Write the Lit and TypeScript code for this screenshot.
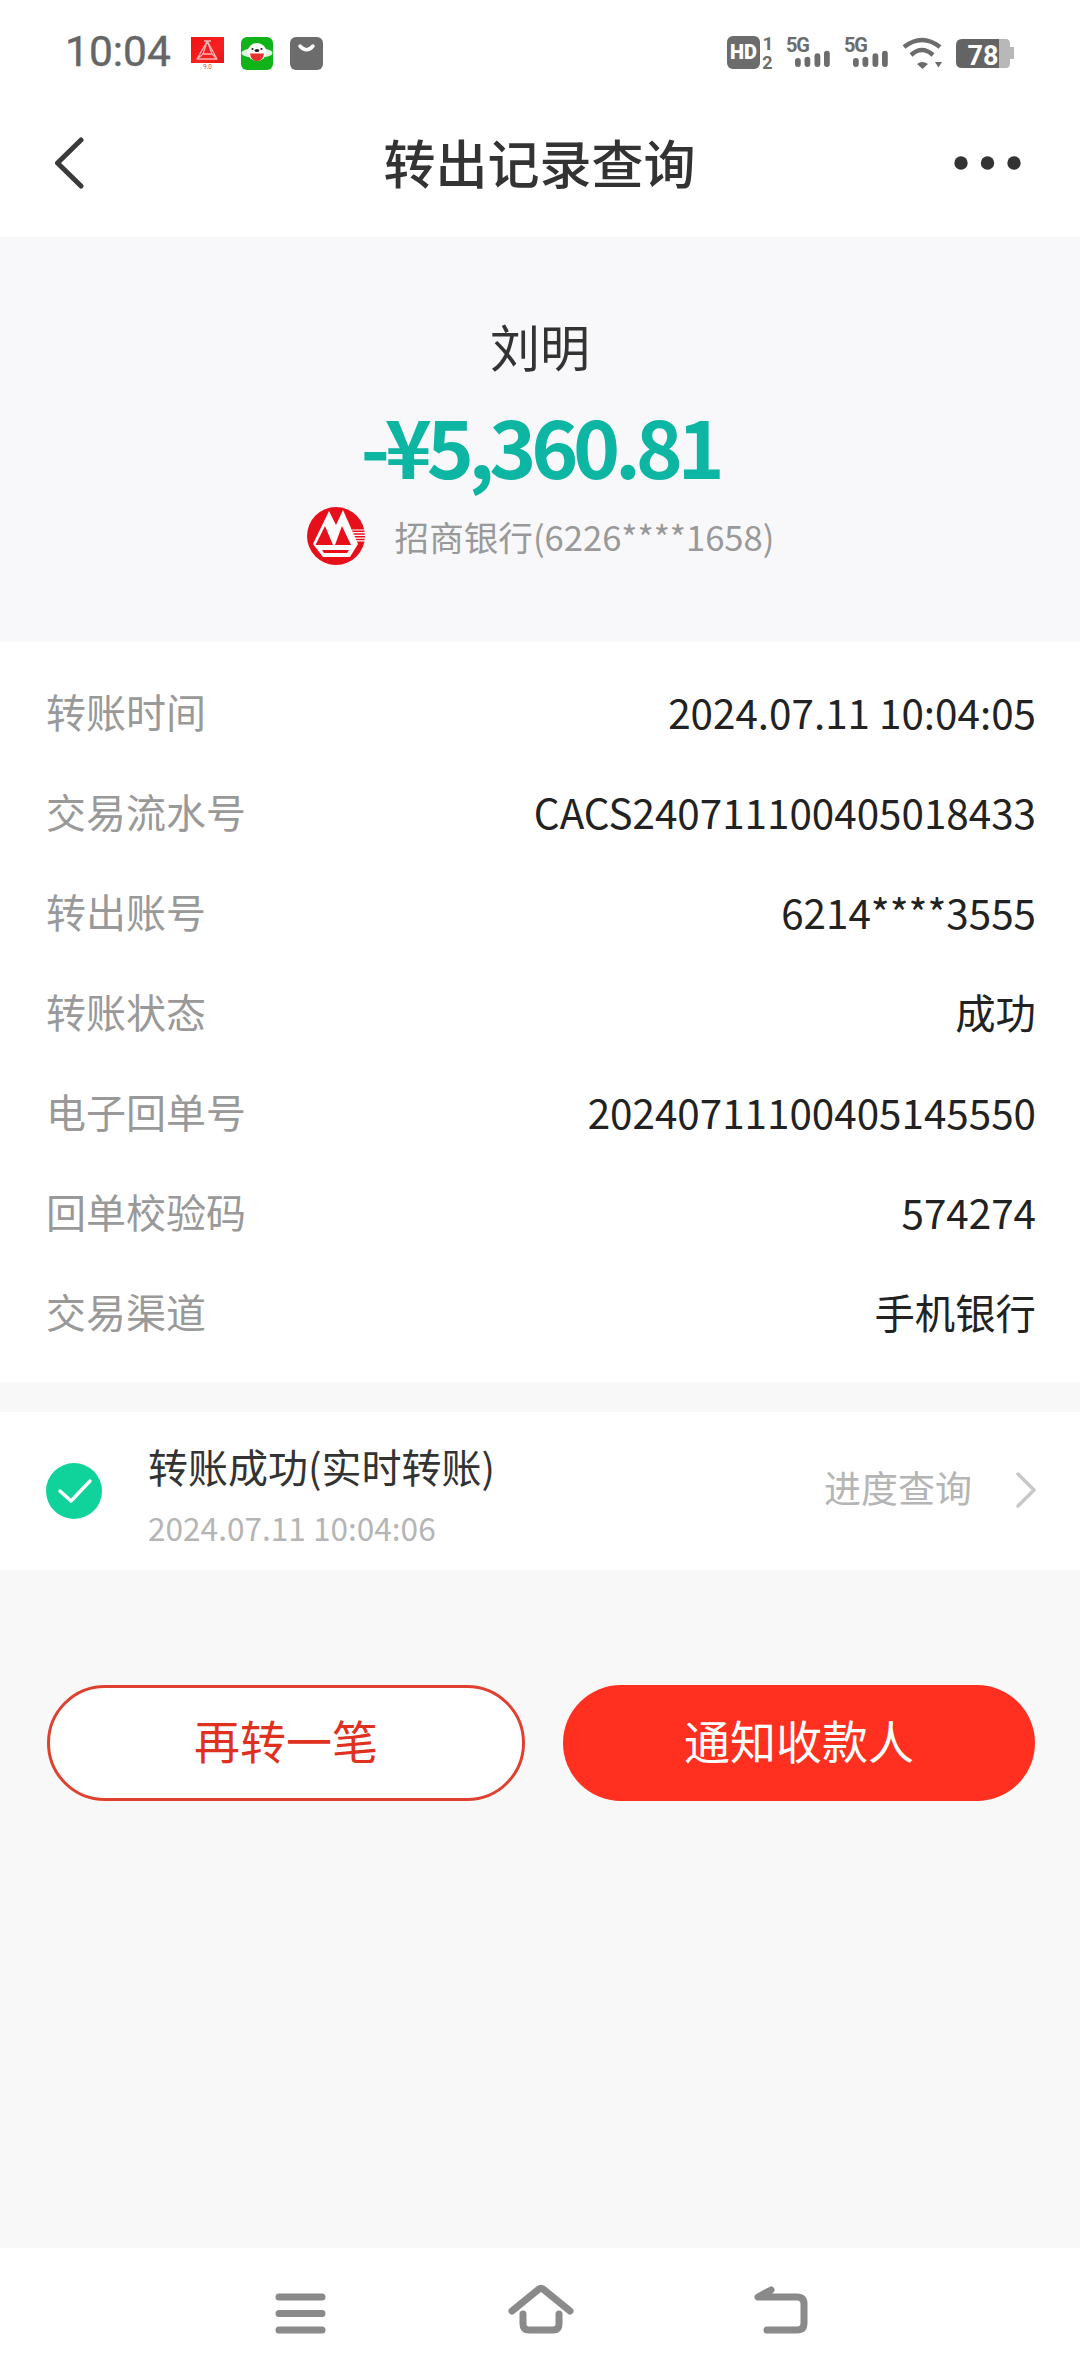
import { LitElement, css, html, svg } from "lit";
import { customElement } from "lit/decorators.js";

const rows = [
  ["转账时间", "2024.07.11 10:04:05"],
  ["交易流水号", "CACS240711100405018433"],
  ["转出账号", "6214****3555"],
  ["转账状态", "成功"],
  ["电子回单号", "20240711100405145550"],
  ["回单校验码", "574274"],
  ["交易渠道", "手机银行"],
];

const signal = (x: number) => svg`
  <text x=${x} y="52" font-size="20" font-weight="700" fill="#6c6c6c" font-family="Roboto, sans-serif" textLength="24">5G</text>
  <g fill="#6c6c6c">
    <rect x=${x + 9} y="58" width="5.800" height="9" rx="2.900"/>
    <rect x=${x + 18.500} y="56.700" width="5.800" height="10.300" rx="2.900"/>
    <rect x=${x + 28.500} y="53.300" width="5.800" height="13.700" rx="2.900"/>
    <rect x=${x + 38} y="50.700" width="5.800" height="16.300" rx="2.900"/>
  </g>
`;

@customElement("app-root")
export class AppRoot extends LitElement {
  static styles = css`
    :host {
      display: flex;
      flex-direction: column;
      height: 2376px;
      background: #f8f8f8;
      font-family: "Noto Sans CJK SC", "Noto Sans", sans-serif;
      color: #333;
    }
    .status {
      height: 72px;
      flex: none;
      box-sizing: border-box;
      background: #fff;
      padding: 32px 0 0 65px;
      display: flex;
      align-items: flex-start;
      justify-content: space-between;
    }
    .status-left {
      display: flex;
      align-items: center;
      gap: 21px;
      height: 40px;
    }
    .time {
      font: 400 42.500px/40px Roboto, sans-serif;
      color: #666;
      width: 105px;
      -webkit-text-stroke: 0.4px #666;
    }
    .status-left svg {
      display: block;
    }
    .status-right {
      margin-top: 1px;
      display: block;
    }
    .nav {
      flex: none;
      height: 165px;
      box-sizing: border-box;
      background: #fff;
      display: grid;
      grid-template-columns: 1fr auto 1fr;
      align-items: center;
      padding: 16px 59px 0 54px;
    }
    .nav h1 {
      margin: 0 0 2px 4px;
      font-size: 52px;
      font-weight: 500;
      color: #333;
      line-height: 64px;
    }
    .nav .more {
      justify-self: end;
      display: block;
    }
    .nav .back {
      display: block;
    }
    .hero {
      flex: none;
      height: 405px;
      box-sizing: border-box;
      display: flex;
      flex-direction: column;
      align-items: center;
      padding-top: 76px;
      background: #f8f8fa;
    }
    .name {
      font-size: 50px;
      line-height: 64px;
      color: #333;
    }
    .amount {
      font-size: 80px;
      line-height: 92px;
      font-weight: 700;
      color: #0db5a3;
      margin-top: 21px;
      letter-spacing: -5.300px;
    }
    .bank {
      display: flex;
      align-items: center;
      gap: 29px;
      font-size: 34.600px;
      line-height: 60px;
      color: #999;
      margin-top: 16px;
    }
    .bank svg {
      display: block;
    }
    .details {
      flex: none;
      height: 740px;
      box-sizing: border-box;
      background: #fff;
      padding: 19px 44px 0 46px;
      display: flex;
      flex-direction: column;
    }
    .row {
      height: 100px;
      display: flex;
      align-items: center;
      justify-content: space-between;
      font-size: 40px;
    }
    .row .k {
      color: #999;
    }
    .row .v {
      color: #222;
      font-size: 40.400px;
    }
    .result {
      flex: none;
      margin-top: 30px;
      height: 158px;
      background: #fff;
      display: flex;
      align-items: center;
      padding: 0 44px 0 46px;
    }
    .result .check {
      display: block;
      flex: none;
      margin-right: 46px;
    }
    .result .info {
      flex: 1;
      padding-top: 7px;
    }
    .result .title {
      font-size: 40px;
      line-height: 50px;
      color: #333;
    }
    .result .date {
      font-size: 31.600px;
      line-height: 42px;
      color: #b5b5b5;
      margin-top: 15px;
    }
    .result .link {
      font-size: 37px;
      color: #b5b5b5;
      margin-right: 44px;
      padding-bottom: 9px;
    }
    .result .chevron {
      display: block;
      margin-bottom: 3px;
    }
    .actions {
      flex: none;
      display: flex;
      gap: 38px;
      padding: 115px 45px 0 47px;
    }
    .btn {
      flex: 1;
      box-sizing: border-box;
      height: 116px;
      border-radius: 58px;
      display: flex;
      align-items: center;
      justify-content: center;
      font-size: 46px;
      padding-bottom: 8px;
    }
    .btn.outline {
      border: 3px solid #e0402f;
      color: #e0301e;
      background: #fff;
    }
    .btn.fill {
      background: #ff3020;
      color: #fff;
    }
    .spacer {
      flex: 1;
    }
    .sysbar {
      flex: none;
      height: 128px;
      background: #fff;
    }
    .sysbar svg {
      display: block;
    }
  `;

  render() {
    return html`
      <div class="status">
        <div class="status-left">
          <span class="time">10:04</span>
          ${this.appIcons()}
        </div>
        ${this.statusRight()}
      </div>
      <div class="nav">
        <svg class="back" width="30" height="52" viewBox="0 0 30 52" fill="none" stroke="#3a3a3a" stroke-width="5" stroke-linecap="round" stroke-linejoin="round">
          <path d="M27 3 L3.500 26 L27 49"/>
        </svg>
        <h1>转出记录查询</h1>
        <svg class="more" width="67" height="14" viewBox="0 0 67 14" fill="#333">
          <circle cx="7" cy="7" r="6.700"/><circle cx="33.500" cy="7" r="6.700"/><circle cx="60" cy="7" r="6.700"/>
        </svg>
      </div>
      <div class="hero">
        <div class="name">刘明</div>
        <div class="amount">-¥5,360.81</div>
        <div class="bank">
          ${this.cmbLogo()}
          <span>招商银行(6226****1658)</span>
        </div>
      </div>
      <div class="details">
        ${rows.map(
          ([k, v]) => html`<div class="row"><span class="k">${k}</span><span class="v">${v}</span></div>`
        )}
      </div>
      <div class="result">
        <svg class="check" width="56" height="56" viewBox="0 0 56 56">
          <circle cx="28" cy="28" r="28" fill="#0fd39a"/>
          <path d="M14 28 L25 38 L44 18" fill="none" stroke="#fff" stroke-width="3.500" stroke-linecap="round" stroke-linejoin="round"/>
        </svg>
        <div class="info">
          <div class="title">转账成功(实时转账)</div>
          <div class="date">2024.07.11 10:04:06</div>
        </div>
        <span class="link">进度查询</span>
        <svg class="chevron" width="20" height="36" viewBox="0 0 20 36" fill="none" stroke="#c8c8c8" stroke-width="3.500" stroke-linecap="round" stroke-linejoin="round">
          <path d="M2 2 L18 18 L2 34"/>
        </svg>
      </div>
      <div class="actions">
        <div class="btn outline">再转一笔</div>
        <div class="btn fill">通知收款人</div>
      </div>
      <div class="spacer"></div>
      <div class="sysbar">
        <svg width="1080" height="128" viewBox="0 0 1080 128" fill="none" stroke="#8a8a8a" stroke-width="7" stroke-linecap="round" stroke-linejoin="round">
          <path d="M279 49 H322 M279 65.500 H322 M279 82 H322"/>
          <path d="M512 63 L539 41 Q541 39.500 543 41 L570 63"/>
          <path d="M523 66 V76 Q523 82 529 82 H553 Q559 82 559 76 V66"/>
          <path d="M771 42 L758 49 H797 Q804 49 804 56 V75 Q804 82 797 82 H767"/>
        </svg>
      </div>
    `;
  }

  appIcons() {
    return html`
      <svg width="132" height="36" viewBox="191 34 132 36">
        <defs>
          <linearGradient id="redIcon" x1="0" y1="0" x2="1" y2="1">
            <stop offset="0" stop-color="#f01010"/>
            <stop offset="0.600" stop-color="#fb2020"/>
            <stop offset="1" stop-color="#e01818"/>
          </linearGradient>
        </defs>
        <rect x="191" y="37" width="33" height="26" fill="url(#redIcon)"/>
        <g fill="none" stroke="#fbb4b4" stroke-width="1.300" stroke-linejoin="round">
          <path d="M207.300 41 L197 59 H217 Z M204 41 H211 M207.300 41 L203 54 L197 59 M207.300 41 L212 54 L217 59 M203 54 H212"/>
        </g>
        <text x="207.500" y="69" font-size="6.500" fill="#d9504f" text-anchor="middle" font-family="Roboto, sans-serif">9.0</text>
        <rect x="241" y="37" width="32" height="33" rx="6" fill="#10b318"/>
        <ellipse cx="257" cy="53" rx="15.500" ry="5" fill="#dff2df"/>
        <ellipse cx="257" cy="52" rx="9.500" ry="9" fill="#fff"/>
        <circle cx="252.500" cy="49" r="1.100" fill="#222"/>
        <circle cx="261.500" cy="49" r="1.100" fill="#222"/>
        <ellipse cx="257" cy="50.500" rx="2.400" ry="1.500" fill="#222"/>
        <path d="M250 53.500 H264 Q263 61 257 61 Q251 61 250 53.500 Z" fill="#e8302c"/>
        <rect x="290" y="37" width="33" height="33" rx="6" fill="#6c6c6c"/>
        <path d="M300 46 Q306.500 53.500 313 46" fill="none" stroke="#fff" stroke-width="3.500" stroke-linecap="round"/>
      </svg>
    `;
  }

  statusRight() {
    return html`
      <svg class="status-right" width="360" height="38" viewBox="720 33 360 38">
        <rect x="727" y="36" width="33" height="33" rx="6" fill="#6c6c6c"/>
        <text x="743.500" y="59" font-size="20" font-weight="900" fill="#fff" text-anchor="middle" font-family="Roboto, sans-serif">HD</text>
        <text x="768" y="50" font-size="19" font-weight="700" fill="#6c6c6c" text-anchor="middle" font-family="Roboto, sans-serif">1</text>
        <text x="767.500" y="68.500" font-size="18" font-weight="700" fill="#6c6c6c" text-anchor="middle" font-family="Roboto, sans-serif">2</text>
        ${signal(786)} ${signal(844)}
        <g fill="none" stroke="#6c6c6c" stroke-width="4.500">
          <path d="M904 47 Q922 33 940 47"/>
          <path d="M911 55 Q922 45 933 55"/>
        </g>
        <path d="M917 64 Q922 60 928 64 L922.500 69 Z" fill="#6c6c6c"/>
        <path d="M935 62 H942 L938.500 67.500 Z" fill="#6c6c6c"/>
        <path d="M962 39 H999 V68 H962 Q956 68 956 62 V45 Q956 39 962 39 Z" fill="#646464"/>
        <path d="M999 39 H1006 Q1010 39 1010 44 V47 H1014 V59 H1010 V63 Q1010 68 1006 68 H999 Z" fill="#b8b8b8"/>
        <text x="983" y="64.500" font-size="27" font-weight="700" fill="#fff" text-anchor="middle" font-family="Roboto, sans-serif">78</text>
      </svg>
    `;
  }

  cmbLogo() {
    return html`
      <svg width="60" height="60" viewBox="0 0 60 60">
        <circle cx="30" cy="30" r="29" fill="#e60f1a"/>
        <path d="M23 5 L30 19 L37 4 L52 38 L44 51 H17 L7 38 Z" fill="#fff"/>
        <path d="M19 20 L9.500 39 H27 Z M36 20 L29 39 H45 Z" fill="#e60f1a"/>
        <path d="M16 44 H43 L41 47 H18 Z" fill="#e60f1a"/>
        <g stroke="#fff" stroke-width="1.200">
          <path d="M46 24 H59 M47 26.700 H59 M48 29.400 H59 M49 32.100 H59 M50 34.800 H59"/>
        </g>
      </svg>
    `;
  }
}
